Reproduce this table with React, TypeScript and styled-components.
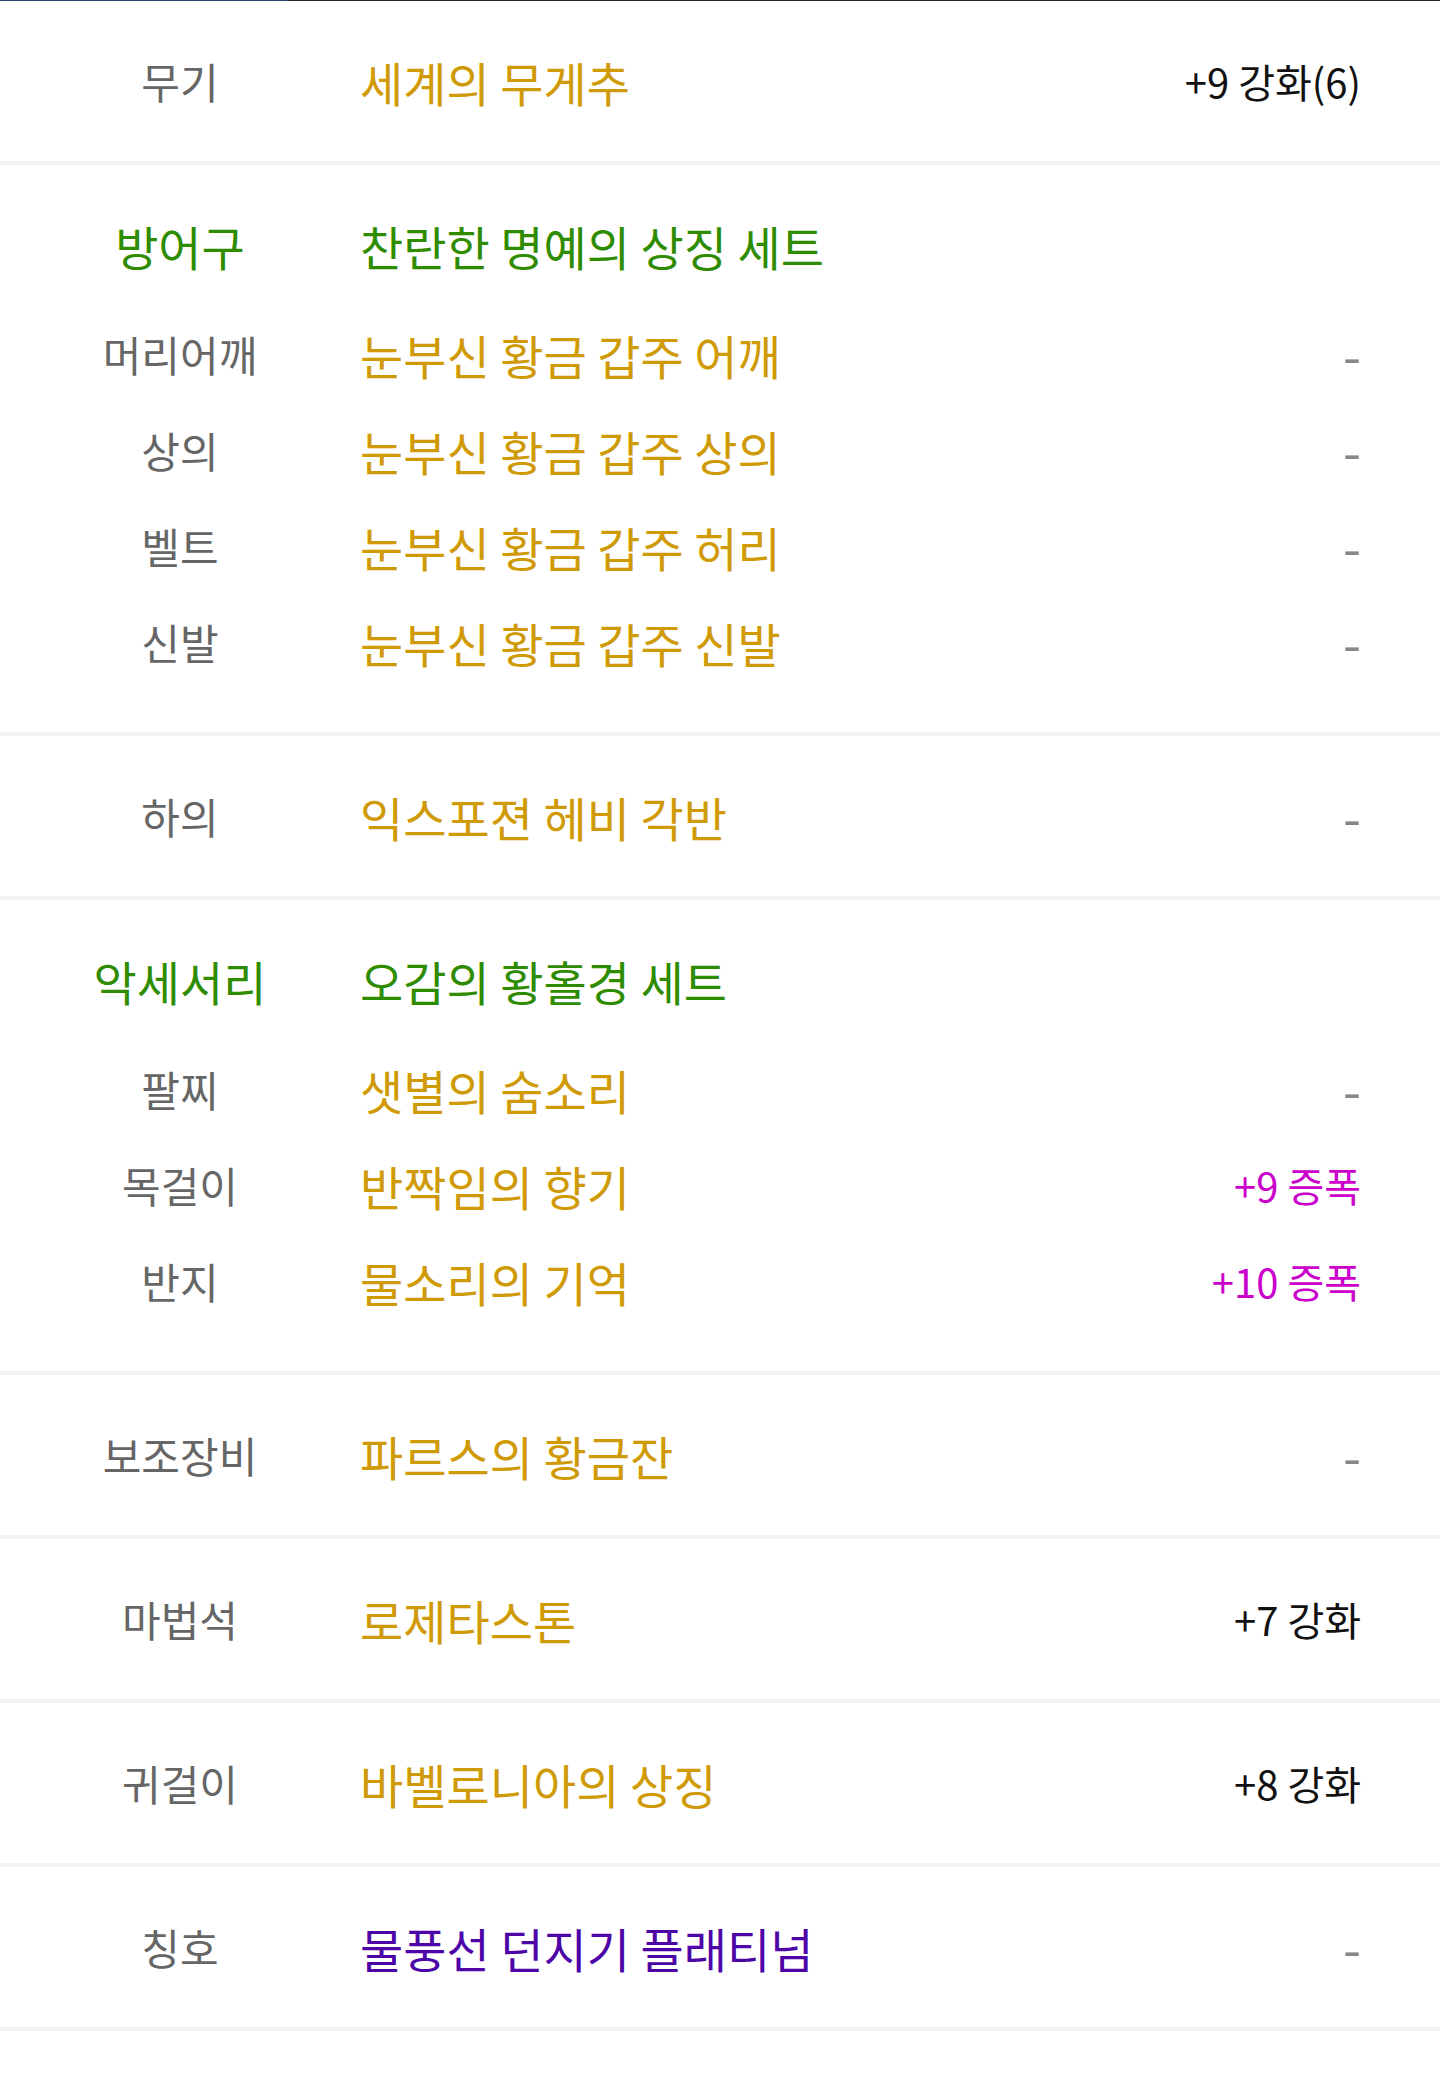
import React from "react";
import styled, { createGlobalStyle } from "styled-components";

const Global = createGlobalStyle`
  html, body { margin: 0; padding: 0; background: #ffffff; }
  body { font-family: "Noto Sans CJK KR", "Noto Sans", sans-serif; }
  * { box-sizing: border-box; }
`;

const Page = styled.div`
  width: 1440px;
  min-height: 2085px;
  background: #ffffff;
`;

const TopBar = styled.div`
  display: flex;
  height: 1px;
  background: #222428;
`;

const TopIndicator = styled.div`
  width: 288px;
  background: #2d4272;
`;

const Section = styled.section<{ $group?: boolean }>`
  display: flex;
  flex-direction: column;
  padding: ${(p) => (p.$group ? "40px 0 42px" : "0")};
  border-bottom: 4px solid #f2f2f2;
`;

const Row = styled.div<{ $h: number; $mb?: number }>`
  display: grid;
  grid-template-columns: 360px 1fr auto;
  align-items: center;
  height: ${(p) => p.$h}px;
  margin-bottom: ${(p) => p.$mb ?? 0}px;
  padding-right: 79px;
`;

type Tone = "gray" | "green" | "gold" | "purple" | "black" | "magenta" | "dash";

const colors: Record<Tone, string> = {
  gray: "#666666",
  green: "#2f8c00",
  gold: "#cf9a05",
  purple: "#4d05a8",
  black: "#111111",
  magenta: "#cc00cc",
  dash: "#888888",
};

const Label = styled.div<{ $tone: Tone }>`
  text-align: center;
  font-size: ${(p) => (p.$tone === "green" ? 47 : 42)}px;
  line-height: 1;
  color: ${(p) => colors[p.$tone]};
  white-space: nowrap;
`;

const Name = styled.div<{ $tone: Tone }>`
  font-size: 47px;
  line-height: 1;
  color: ${(p) => colors[p.$tone]};
  white-space: nowrap;
`;

const Value = styled.div<{ $tone: Tone }>`
  text-align: right;
  font-size: ${(p) => (p.$tone === "dash" ? 52 : 40)}px;
  line-height: 1;
  color: ${(p) => colors[p.$tone]};
  white-space: nowrap;
`;

type Item = { label: string; name: string; nameTone?: Tone; value: string; valueTone?: Tone };

const ItemRow: React.FC<{ item: Item; h: number }> = ({ item, h }) => {
  const vt: Tone = item.valueTone ?? (item.value === "-" ? "dash" : "black");
  return (
    <Row $h={h}>
      <Label $tone="gray">{item.label}</Label>
      <Name $tone={item.nameTone ?? "gold"}>{item.name}</Name>
      <Value $tone={vt}>{item.value}</Value>
    </Row>
  );
};

type Block =
  | { kind: "single"; item: Item }
  | { kind: "group"; label: string; setName: string; items: Item[] };

const blocks: Block[] = [
  { kind: "single", item: { label: "무기", name: "세계의 무게추", value: "+9 강화(6)" } },
  {
    kind: "group",
    label: "방어구",
    setName: "찬란한 명예의 상징 세트",
    items: [
      { label: "머리어깨", name: "눈부신 황금 갑주 어깨", value: "-" },
      { label: "상의", name: "눈부신 황금 갑주 상의", value: "-" },
      { label: "벨트", name: "눈부신 황금 갑주 허리", value: "-" },
      { label: "신발", name: "눈부신 황금 갑주 신발", value: "-" },
    ],
  },
  { kind: "single", item: { label: "하의", name: "익스포젼 헤비 각반", value: "-" } },
  {
    kind: "group",
    label: "악세서리",
    setName: "오감의 황홀경 세트",
    items: [
      { label: "팔찌", name: "샛별의 숨소리", value: "-" },
      { label: "목걸이", name: "반짝임의 향기", value: "+9 증폭", valueTone: "magenta" },
      { label: "반지", name: "물소리의 기억", value: "+10 증폭", valueTone: "magenta" },
    ],
  },
  { kind: "single", item: { label: "보조장비", name: "파르스의 황금잔", value: "-" } },
  { kind: "single", item: { label: "마법석", name: "로제타스톤", value: "+7 강화" } },
  { kind: "single", item: { label: "귀걸이", name: "바벨로니아의 상징", value: "+8 강화" } },
  { kind: "single", item: { label: "칭호", name: "물풍선 던지기 플래티넘", nameTone: "purple", value: "-" } },
];

export default function App() {
  return (
    <Page>
      <Global />
      <TopBar>
        <TopIndicator />
      </TopBar>
      {blocks.map((b, i) =>
        b.kind === "single" ? (
          <Section key={i}>
            <ItemRow item={b.item} h={160} />
          </Section>
        ) : (
          <Section key={i} $group>
            <Row $h={80} $mb={21}>
              <Label $tone="green">{b.label}</Label>
              <Name $tone="green">{b.setName}</Name>
              <span />
            </Row>
            {b.items.map((it, j) => (
              <ItemRow key={j} item={it} h={96} />
            ))}
          </Section>
        )
      )}
    </Page>
  );
}
